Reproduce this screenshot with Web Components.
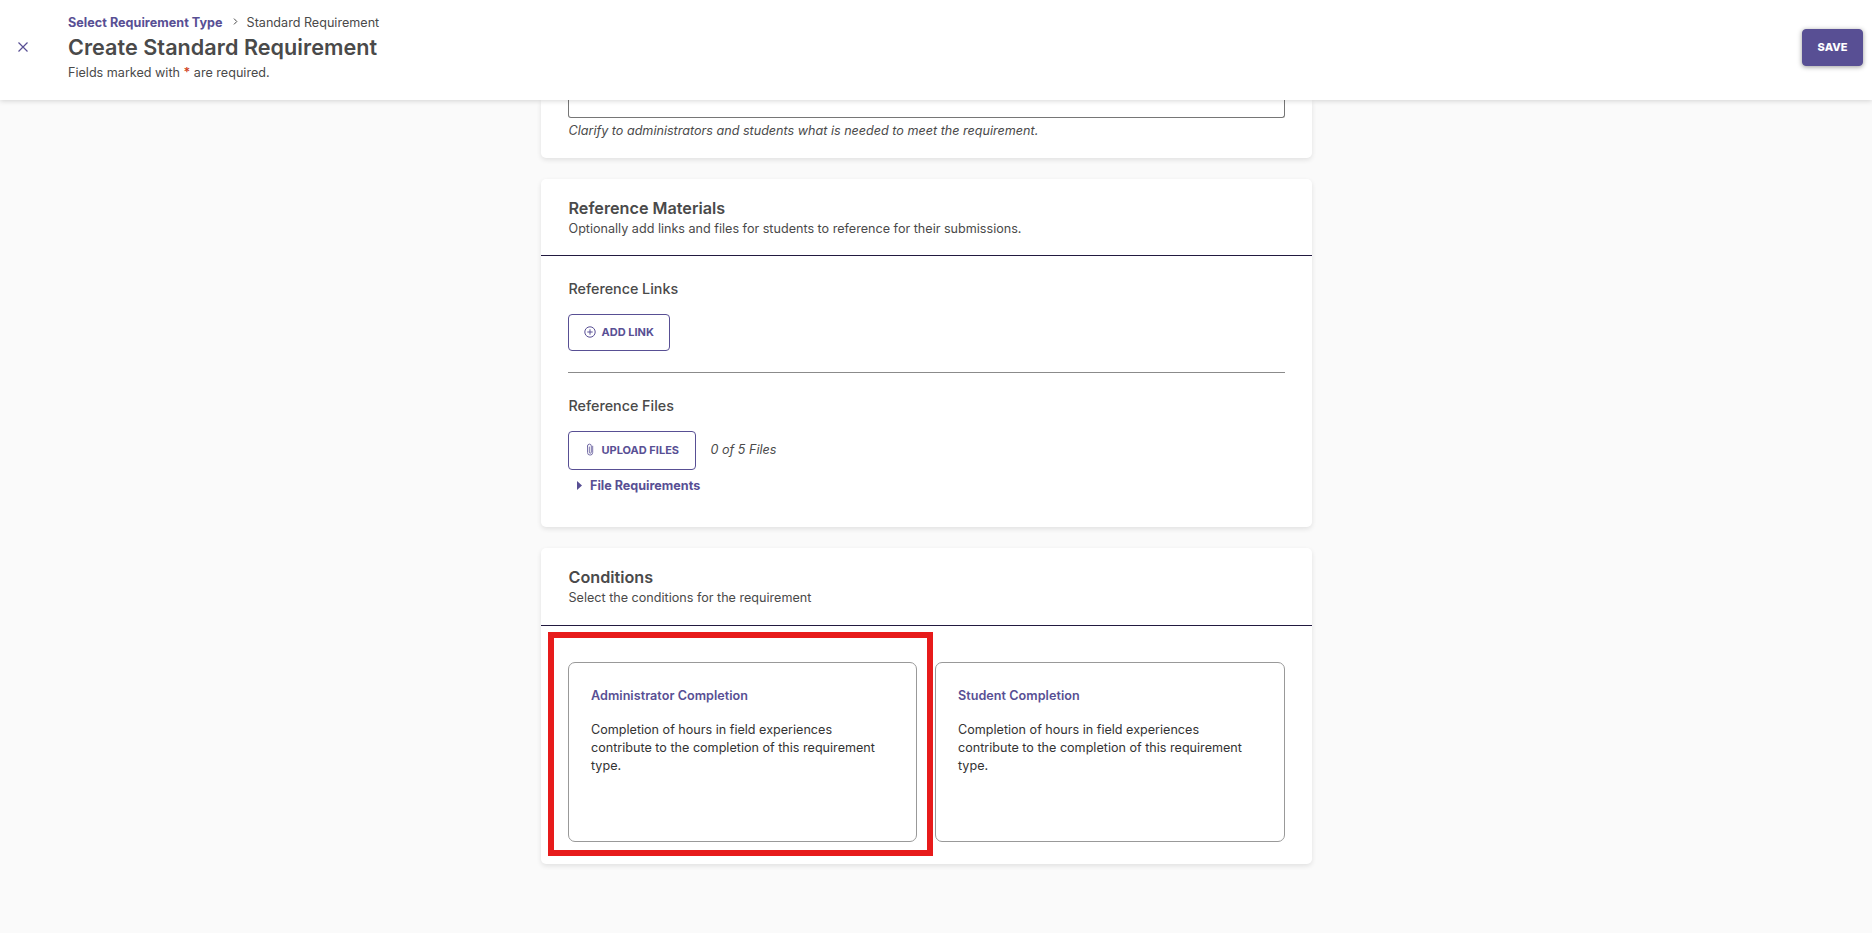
<!DOCTYPE html>
<html lang="en">
<head>
<meta charset="utf-8">
<title>Create Standard Requirement</title>
<style>
    html, body { height: 100%; }
    body { margin: 0; overflow: hidden; font-family: Inter, "Liberation Sans", sans-serif; font-size: 12.6px; color: #4a4a4a; background: #fafafa; }
</style>
</head>
<body>
<requirement-page>
    <page-header slot="header" heading="Create Standard Requirement">
        <a slot="parent">Select Requirement Type</a>
        <span slot="current">Standard Requirement</span>
        <app-button slot="action" variant="primary">SAVE</app-button>
    </page-header>
    <text-field hint="Clarify to administrators and students what is needed to meet the requirement."></text-field>
    <form-card heading="Reference Materials" description="Optionally add links and files for students to reference for their submissions.">
        <field-group heading="Reference Links">
            <app-button icon="plus">ADD LINK</app-button>
        </field-group>
        <field-group heading="Reference Files" divided>
            <app-button icon="clip" class="upload">UPLOAD FILES</app-button>
            <em>0 of 5 Files</em>
            <file-requirements slot="footer">File Requirements</file-requirements>
        </field-group>
    </form-card>
    <form-card heading="Conditions" description="Select the conditions for the requirement" variant="grid">
        <condition-card heading="Administrator Completion" highlighted>Completion of hours in field experiences contribute to the completion of this requirement type.</condition-card>
        <condition-card heading="Student Completion">Completion of hours in field experiences contribute to the completion of this requirement type.</condition-card>
    </form-card>
</requirement-page>

<script>
const icons = {
    plus: `<svg width="12" height="12" viewBox="0 0 12 12" fill="none" stroke="currentColor"><circle cx="6" cy="6" r="5.2"/><path d="M6 3.3v5.4M3.3 6h5.4"/></svg>`,
    clip: `<svg width="12" height="13" viewBox="0 0 12 13" fill="none" stroke="currentColor" stroke-width=".8" stroke-linecap="round"><path d="M3.5 3v6.5a2.6 2.6 0 0 0 5.2 0V3.2M3.5 3a1.9 1.9 0 0 1 3.8 0v6.2a1 1 0 0 1-2 0V4"/></svg>`
};

class RequirementPage extends HTMLElement {
    connectedCallback() {
        const shadow = this.attachShadow({ mode: 'open' });
        shadow.innerHTML = `
        <style>
            :host { display: flex; flex-direction: column; height: 100%; }
            main { flex: 1; min-height: 0; overflow: hidden; display: flex; flex-direction: column; align-items: center; gap: 21px; padding-right: 19px; }
            ::slotted(:not([slot])) { flex: none; width: 771px; }
        </style>
        <slot name="header"></slot>
        <main><slot></slot></main>
        `;
    }
}

class PageHeader extends HTMLElement {
    connectedCallback() {
        const shadow = this.attachShadow({ mode: 'open' });
        shadow.innerHTML = `
        <style>
            :host { display: flex; flex: none; box-sizing: border-box; height: 100px; padding: 14px 9px 0 18px; background: #fff; box-shadow: 0 1px 5px rgba(0, 0, 0, .16); position: relative; z-index: 1; }
            .close { width: 10px; height: 10px; margin: 28px 40px 0 0; color: #584f94; }
            .close svg { display: block; }
            .titles { flex: 1; }
            nav { display: flex; align-items: center; height: 17px; white-space: pre; }
            nav svg { margin: 0 9px 3px 10px; }
            ::slotted(a) { color: #584f94; font-weight: 700; letter-spacing: .03px; }
            h1 { margin: 3px 0 4px; font-size: 21.6px; line-height: 27px; font-weight: 600; letter-spacing: .04px; }
            p { margin: 0; line-height: 16px; }
            b { color: #d0401b; font-weight: 600; }
            ::slotted(app-button) { margin-top: 15px; align-self: flex-start; }
        </style>
        <div class="close"><svg width="10" height="10" viewBox="0 0 10 10" stroke="currentColor" stroke-width="1.2"><path d="M.5.5l9 9M9.5.5l-9 9"/></svg></div>
        <div class="titles">
            <nav><slot name="parent"></slot><svg width="5" height="7" viewBox="0 0 5 7" fill="none" stroke="#4a4a4a"><path d="M1 .6l2.8 2.9L1 6.4"/></svg><slot name="current"></slot></nav>
            <h1>${this.getAttribute('heading')}</h1>
            <p>Fields marked with <b>*</b> are required.</p>
        </div>
        <slot name="action"></slot>
        `;
    }
}

class AppButton extends HTMLElement {
    connectedCallback() {
        const shadow = this.attachShadow({ mode: 'open' });
        shadow.innerHTML = `
        <style>
            :host { display: inline-flex; flex: none; }
            button { display: flex; align-items: center; gap: 5.5px; box-sizing: border-box; width: 102px; height: 37px; margin: 0; padding: 0 0 2px 15px; font: 700 11px Inter, "Liberation Sans", sans-serif; white-space: nowrap; color: #584f94; background: #fff; border: 1px solid #584f94; border-radius: 4px; }
            svg { display: block; }
            :host(.upload) button { width: 128px; height: 39px; }
            :host([variant=primary]) button { width: 61px; padding: 0 0 1px; justify-content: center; font-weight: 800; color: #fff; background: #584f94; box-shadow: 0 1px 5px rgba(0, 0, 0, .4); }
        </style>
        <button type="button">${icons[this.getAttribute('icon')] || ''}<slot></slot></button>
        `;
    }
}

class TextField extends HTMLElement {
    connectedCallback() {
        const shadow = this.attachShadow({ mode: 'open' });
        shadow.innerHTML = `
        <style>
            :host { display: block; box-sizing: border-box; height: 58px; padding: 0 27px; background: #fff; border-radius: 0 0 5px 5px; box-shadow: 0 2px 5px rgba(0, 0, 0, .1); }
            .box { box-sizing: border-box; height: 18px; border: 1px solid #767676; border-top: 0; border-radius: 0 0 3px 3px; }
            p { margin: 4px 0 0 .5px; line-height: 18px; font-style: italic; }
        </style>
        <div class="box"></div>
        <p>${this.getAttribute('hint')}</p>
        `;
    }
}

class FormCard extends HTMLElement {
    connectedCallback() {
        const shadow = this.attachShadow({ mode: 'open' });
        shadow.innerHTML = `
        <style>
            :host { display: block; background: #fff; border-radius: 5px; box-shadow: 0 2px 5px rgba(0, 0, 0, .1); }
            header { box-sizing: border-box; height: 77px; padding: 19px 27.5px 0; border-bottom: 1px solid #221a40; }
            h2 { margin: 0; font-size: 16.2px; line-height: 20px; font-weight: 600; }
            p { margin: 2px 0 0; line-height: 18px; }
            .body { box-sizing: border-box; height: 271px; padding: 0 27px; }
            :host([variant=grid]) header { height: 78px; }
            :host([variant=grid]) .body { display: grid; grid-template-columns: 349px 350px; gap: 18px; height: 238px; padding-top: 36px; align-items: start; }
        </style>
        <header>
            <h2>${this.getAttribute('heading')}</h2>
            <p>${this.getAttribute('description')}</p>
        </header>
        <div class="body"><slot></slot></div>
        `;
    }
}

class FieldGroup extends HTMLElement {
    connectedCallback() {
        const shadow = this.attachShadow({ mode: 'open' });
        shadow.innerHTML = `
        <style>
            :host { display: block; padding: 23px 0 21px; }
            :host([divided]) { border-top: 1px solid #8b8b8b; }
            h3 { margin: 0 0 15px .5px; font-size: 14.3px; line-height: 20px; font-weight: 500; }
            .row { display: flex; align-items: center; gap: 14.5px; }
            ::slotted(em) { margin-bottom: 3px; }
        </style>
        <h3>${this.getAttribute('heading')}</h3>
        <div class="row"><slot></slot></div>
        <slot name="footer"></slot>
        `;
    }
}

class FileRequirements extends HTMLElement {
    connectedCallback() {
        const shadow = this.attachShadow({ mode: 'open' });
        shadow.innerHTML = `
        <style>
            :host { display: flex; align-items: center; gap: 8px; padding: 7px 0 0 9px; line-height: 18px; font-weight: 700; color: #584f94; }
            svg { margin-bottom: 2px; }
        </style>
        <svg width="5" height="9" viewBox="0 0 5 9" fill="currentColor"><path d="M0 0l5 4.5L0 9z"/></svg>
        <span><slot></slot></span>
        `;
    }
}

class ConditionCard extends HTMLElement {
    connectedCallback() {
        const shadow = this.attachShadow({ mode: 'open' });
        shadow.innerHTML = `
        <style>
            :host { display: block; box-sizing: border-box; position: relative; height: 180px; padding: 24px 22px; border: 1px solid #999; border-radius: 7px; line-height: 18px; color: #333; }
            h4 { margin: 0 0 16px; font-size: 12.6px; font-weight: 600; letter-spacing: .04px; color: #584f94; }
            /* red marker drawn around the card */
            :host([highlighted])::after { content: ""; position: absolute; inset: -31px -17px -15px -21px; border: 6px solid #e71b1b; }
        </style>
        <h4>${this.getAttribute('heading')}</h4>
        <slot></slot>
        `;
    }
}

customElements.define('requirement-page', RequirementPage);
customElements.define('page-header', PageHeader);
customElements.define('app-button', AppButton);
customElements.define('text-field', TextField);
customElements.define('form-card', FormCard);
customElements.define('field-group', FieldGroup);
customElements.define('file-requirements', FileRequirements);
customElements.define('condition-card', ConditionCard);
</script>
</body>
</html>
